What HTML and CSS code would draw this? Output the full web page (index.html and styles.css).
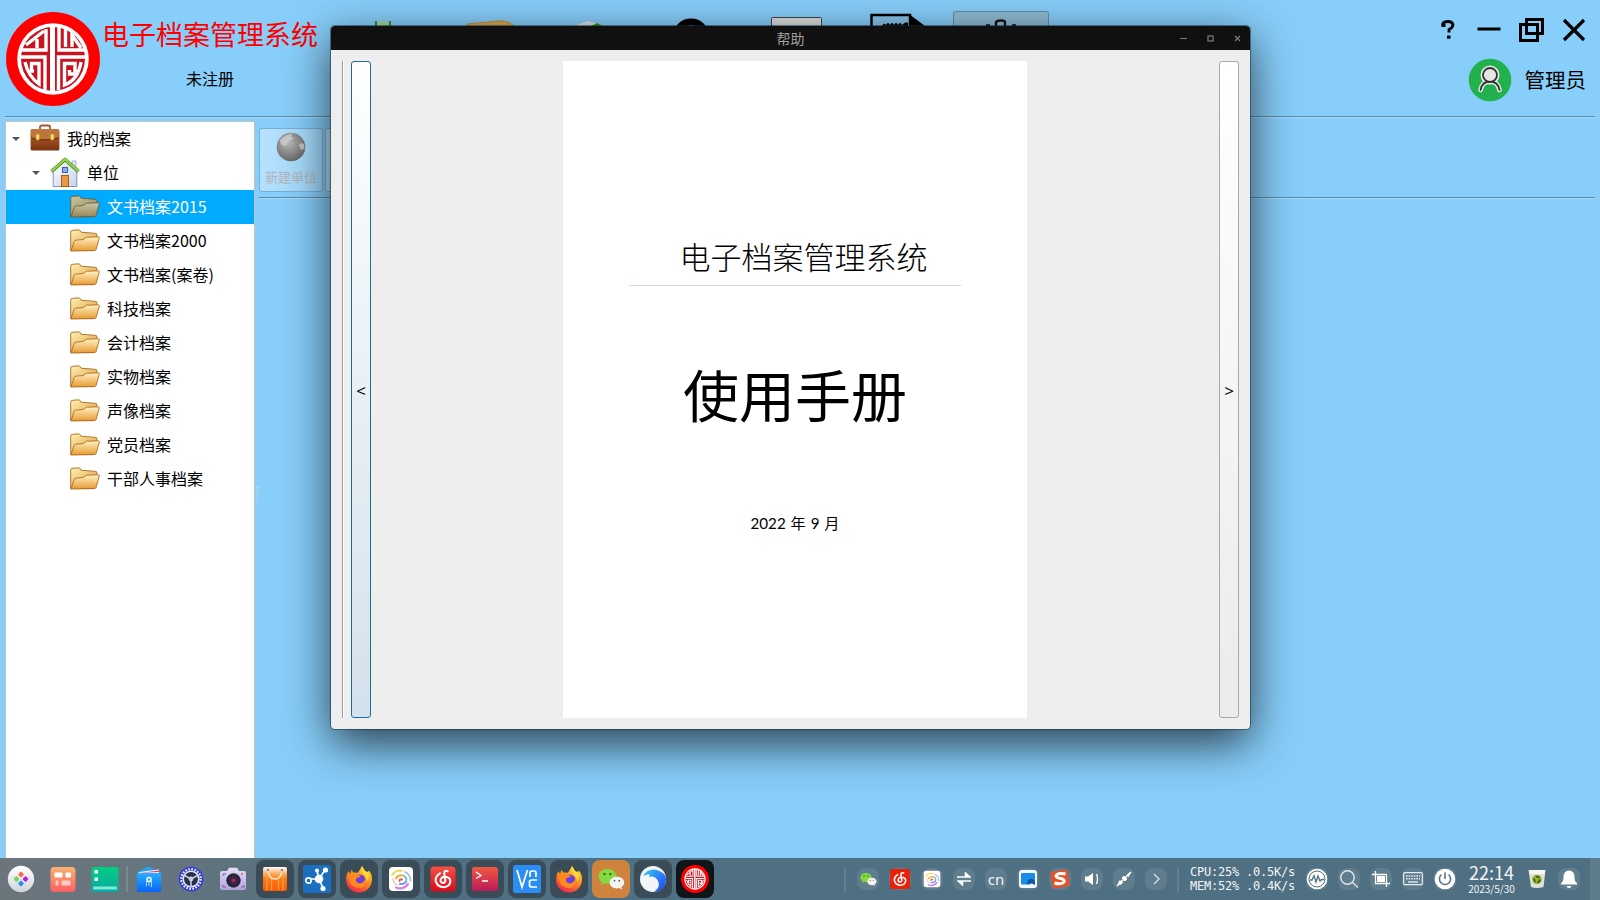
FILE: index.html
```html
<!DOCTYPE html>
<html lang="zh-CN">
<head>
<meta charset="utf-8">
<title>电子档案管理系统</title>
<link rel="stylesheet" href="styles.css">
</head>
<body>
<svg class="defs" width="0" height="0">
  <defs>
    <linearGradient id="gFolder" x1="0" y1="0" x2="0" y2="1"><stop offset="0" stop-color="#fff3c4"/><stop offset="1" stop-color="#e79a32"/></linearGradient>
    <linearGradient id="gFolderBack" x1="0" y1="0" x2="1" y2="1"><stop offset="0" stop-color="#fff0b4"/><stop offset="1" stop-color="#dd9a3c"/></linearGradient>
    <linearGradient id="gCase" x1="0" y1="0" x2="0" y2="1"><stop offset="0" stop-color="#c77f46"/><stop offset=".5" stop-color="#9a4f1e"/><stop offset="1" stop-color="#7c3312"/></linearGradient>
    <linearGradient id="gWall" x1="0" y1="0" x2="1" y2="1"><stop offset="0" stop-color="#fff"/><stop offset="1" stop-color="#c3d3ef"/></linearGradient>
    <radialGradient id="gGlobe" cx=".42" cy=".35" r=".65"><stop offset="0" stop-color="#b9b9b9"/><stop offset="1" stop-color="#6a6a6a"/></radialGradient>
    <linearGradient id="gPeach" x1="0" y1="0" x2="0" y2="1"><stop offset="0" stop-color="#fbb071"/><stop offset="1" stop-color="#f96060"/></linearGradient>
    <linearGradient id="gGreen" x1="0" y1="0" x2="0" y2="1"><stop offset="0" stop-color="#02cf7e"/><stop offset="1" stop-color="#0ba7a4"/></linearGradient>
    <linearGradient id="gBlue" x1="0" y1="0" x2="0" y2="1"><stop offset="0" stop-color="#27b1ff"/><stop offset="1" stop-color="#0a62f5"/></linearGradient>
    <linearGradient id="gOrange" x1="0" y1="0" x2="0" y2="1"><stop offset="0" stop-color="#fff"/><stop offset=".25" stop-color="#ffb36a"/><stop offset=".5" stop-color="#ff7a12"/><stop offset="1" stop-color="#f85a00"/></linearGradient>
    <linearGradient id="gTerm" x1="0" y1="0" x2="0" y2="1"><stop offset="0" stop-color="#f2593f"/><stop offset="1" stop-color="#b91b5b"/></linearGradient>
    <linearGradient id="gRed" x1="0" y1="0" x2="0" y2="1"><stop offset="0" stop-color="#f55145"/><stop offset="1" stop-color="#dc0b18"/></linearGradient>
    <linearGradient id="gFox" x1=".8" y1="0" x2=".3" y2="1"><stop offset="0" stop-color="#ffe635"/><stop offset=".45" stop-color="#ff9220"/><stop offset="1" stop-color="#f0264d"/></linearGradient>
    <linearGradient id="gWave" x1="0" y1="0" x2="1" y2="1"><stop offset="0" stop-color="#39c9f5"/><stop offset="1" stop-color="#1d3bf5"/></linearGradient>
    <linearGradient id="gBall" x1="0" y1="0" x2="0" y2="1"><stop offset="0" stop-color="#fff"/><stop offset="1" stop-color="#cfd5d8"/></linearGradient>
    <linearGradient id="gCam" x1="0" y1="0" x2="0" y2="1"><stop offset="0" stop-color="#e6dffa"/><stop offset="1" stop-color="#b2a2dc"/></linearGradient>

    <symbol id="folder" viewBox="0 0 30 24">
      <path d="M.7 21.5V3.2Q.7 1.600 2.200 1.400L8.600.8Q9.800.8 10.300 2L11 3.200 26 4.400Q27 4.600 26.900 6V10L24 21.500Z" fill="url(#gFolderBack)" stroke="#a8691f" stroke-width=".9"/>
      <path d="M.9 22 4.200 12.200Q4.600 11.200 6 11.100L13 10.600 16.500 8.200 28.400 7.800Q29.600 7.900 29.300 9L26 20.600Q25.700 21.500 24.400 21.600Z" fill="url(#gFolder)" stroke="#b06a1c" stroke-width=".9"/>
    </symbol>
    <symbol id="seal" viewBox="0 0 94 94">
      <circle cx="47" cy="47" r="47" fill="#f00"/>
      <circle cx="47" cy="47" r="35.800" fill="#fff"/>
      <circle cx="47" cy="47" r="32" fill="#c8141e"/>
      <g fill="none" stroke="#fff" stroke-width="3.400">
        <path d="M46.500 14V80" stroke-width="5"/>
        <path d="M40 17V38H16M20 33 38 19M31 36V27"/>
        <path d="M53 15V38H79M59.500 17V35M66 19V35M66 23 75 36"/>
        <path d="M15 45H39V78M19 50Q22 64 33 72V51.500H25.500V59H28"/>
        <path d="M79 45H52.500V78M75 50Q72 68 58.500 73V51.500H69V62H63.500V58"/>
      </g>
    </symbol>
    <symbol id="firefox" viewBox="0 0 28 28">
      <path d="M14 27.5A12.5 12.5 0 0 1 1.2 14Q1 9 3.800 6.200L5 9 6.600 4.800 8.200 7.400 13 7.800 17 1 20 6 22 7 24 5.800Q27 9 27 14.500A13 13 0 0 1 14 27.500Z" fill="url(#gFox)"/>
      <circle cx="14.600" cy="15" r="5.600" fill="#6a3fe0"/>
      <path d="M3.200 12Q8 7.200 13.400 9.400L16 12Q12 12 10.800 14.400 11 18 15 18.400 19 18 20 14 22 20 17 22.400 9 24 5 18Z" fill="#ff8b20"/>
      <path d="M17 1Q15.500 5 19 9.200T22 17Q26 10 22 7L20 6Z" fill="#ffd93a"/>
    </symbol>
    <symbol id="wechat" viewBox="0 0 26 22">
      <path d="M9 1C4.400 1 .6 4 .6 8c0 2.300 1.200 4.100 3 5.400L2.800 16.400 6.200 14.600Q7.600 15 9 15C14 15 17.600 12 17.600 8S13.600 1 9 1Z" fill="#83d940"/>
      <circle cx="6.200" cy="5.800" r="1.100" fill="#2e5514"/><circle cx="11.900" cy="5.800" r="1.100" fill="#2e5514"/>
      <path d="M18.300 8.300c-4 0-7.100 2.500-7.100 5.700s3.100 5.700 7.100 5.700q1.300 0 2.400-.4l2.500 1.500-.6-2.500c1.700-1 2.700-2.500 2.700-4.300 0-3.200-3-5.700-7-5.700Z" fill="#f4f4f4"/>
      <circle cx="15.900" cy="12.200" r=".9" fill="#666"/><circle cx="20.500" cy="12.200" r=".9" fill="#666"/>
    </symbol>
    <symbol id="netease" viewBox="0 0 26 26">
      <rect x=".5" y=".5" width="25" height="25" rx="4" fill="url(#gRed)"/>
      <use href="#note"/>
    </symbol>
    <symbol id="note" viewBox="0 0 26 26">
      <path d="M17.700 5.200Q14.300 4 14.200 7.200L15.400 14.800Q15 17 13 17 10.400 16.600 10.600 14.300 11 11 15 10.800 20 11 20.400 15 20 20.800 13.400 21.200 6.200 20.600 5.600 14.200 5.700 9.700 10 7.300" fill="none" stroke="#fff" stroke-width="2" stroke-linecap="round"/>
    </symbol>
    <symbol id="swirl" viewBox="0 0 26 26">
      <rect x="1" y="1" width="24" height="24" rx="4" fill="#fff"/>
      <g fill="none" stroke-width="1.700" stroke-linecap="round">
        <path d="M4 9Q8 3.500 14 5" stroke="#e9d646"/><path d="M17 6Q23 9 22.500 15" stroke="#b7aef2"/>
        <path d="M8 21.500Q15 24.500 20 18" stroke="#cf7fe8" stroke-width="2.200"/><path d="M5 12Q5 18 10 19" stroke="#f6c4a4" stroke-width="1.200"/>
        <path d="M8 12.500Q10 8.500 15 9.500" stroke="#f0b13c" stroke-width="2"/><path d="M16 10Q19.500 12 18 16" stroke="#58c6b0"/>
        <path d="M12 18Q16 18.500 17.500 16" stroke="#7d8ff0" stroke-width="2"/><path d="M11.500 15Q12 12.500 14 13.500" stroke="#e85b50" stroke-width="2"/>
      </g>
    </symbol>
  </defs>
</svg>

<div class="desktop">
  <main class="app">
    <header class="header">
      <svg class="logo" viewBox="0 0 94 94"><use href="#seal"/></svg>
      <div class="brand">
        <h1 class="brand-name">电子档案管理系统</h1>
        <div class="brand-status">未注册</div>
      </div>
      <nav class="modules">
        <div class="module"><svg viewBox="0 0 96 80"><rect x="41" y="10.500" width="14" height="50" fill="#9fd79c"/><path d="M41 10V60M55 10V60" stroke="#2f8d45" stroke-width="2"/></svg></div>
        <div class="module"><svg viewBox="0 0 96 80"><path d="M29 13 57 10.500Q69 8 76 15V60H29Z" fill="#dba851" stroke="#c48b35"/></svg></div>
        <div class="module"><svg viewBox="0 0 96 80"><path d="M33 15 47 10 64 15V60H33Z" fill="#dde3e6"/><path d="M50 15 56 12 64 16Z" fill="#3d9313"/></svg></div>
        <div class="module"><svg viewBox="0 0 96 80"><circle cx="47" cy="26" r="15" fill="none" stroke="#000" stroke-width="7"/></svg></div>
        <div class="module"><svg viewBox="0 0 96 80"><rect x="24.500" y="6.500" width="50" height="50" rx="1" fill="#dcdcdc" stroke="#3b4145"/></svg></div>
        <div class="module"><svg viewBox="0 0 96 80"><path d="M21.500 60V4H60V60" fill="#87c3ea" stroke="#000" stroke-width="2.500"/><path d="M59 3 75 15V60H59Z"/><path d="M32 15Q34 11 36 14 38 10 40 14 42 10 44 14 46 10 48 14 50 10 52 14 56 10 58 12V19H31Z"/></svg></div>
        <div class="module module-active"><svg viewBox="0 0 96 80"><path d="M43 17V11Q44 9.500 48 9.500T52 11V17M33 14.500H37M59 14.500H63" fill="none" stroke="#111" stroke-width="2.400"/></svg></div>
      </nav>
      <div class="session">
        <div class="controls">
          <svg width="16" height="20" viewBox="0 0 16 20"><path d="M3 6V3.500Q4 1.500 8 1.500T13 4.500Q13 7.500 9 9.500V12.500" fill="none" stroke="#000" stroke-width="2.800"/><rect x="1.500" y="3.500" width="4" height="3.500"/><rect x="7" y="15.500" width="3.500" height="3.200"/></svg>
          <svg width="24" height="24" viewBox="0 0 24 24"><rect x=".5" y="9.500" width="23" height="3"/></svg>
          <svg width="25" height="24" viewBox="0 0 25 24"><g fill="none" stroke="#000" stroke-width="3"><rect x="1.500" y="6.500" width="17" height="16"/><rect x="7.500" y="1.500" width="16" height="14"/></g></svg>
          <svg width="24" height="24" viewBox="0 0 24 24"><path d="M2 2 22 22M22 2 2 22" stroke="#000" stroke-width="3.200"/></svg>
        </div>
        <div class="user">
          <svg width="44" height="44" viewBox="0 0 44 44"><circle cx="22" cy="22" r="21.300" fill="#22b14c"/><g fill="none" stroke-linecap="round"><path d="M12.500 32Q14 23.500 22 23.500T31.500 32" stroke="#eee" stroke-width="4.500"/><circle cx="22" cy="17" r="7.500" fill="#e6e6e6" stroke="#eee" stroke-width="4"/><path d="M12.500 32Q14 23.500 22 23.500T31.500 32" stroke="#333" stroke-width="1.800"/><circle cx="22" cy="17" r="7" fill="#e6e6e6" stroke="#333" stroke-width="1.800"/></g></svg>
          <span class="user-name">管理员</span>
        </div>
      </div>
    </header>

    <div class="workspace">
      <aside class="tree">
        <div class="row level-0"><i class="caret"></i>
          <svg class="row-icon" viewBox="0 0 30 28"><path d="M10 6V3Q10 1.500 12 1.500H18Q20 1.500 20 3V6" fill="none" stroke="#9a5a2c" stroke-width="1.800"/><rect x=".6" y="5" width="28.800" height="21.500" rx="1.500" fill="url(#gCase)"/><path d="M1 5.500H29L29.400 13Q15 18 .6 13Z" fill="#bd753c"/><path d="M1 14Q15 18 29 14" fill="none" stroke="#6e2c0c"/><rect x="6" y="10" width="3.500" height="6" rx="1.300" fill="#ffdf6b" stroke="#b98022" stroke-width=".6"/><rect x="20.500" y="10" width="3.500" height="6" rx="1.300" fill="#ffdf6b" stroke="#b98022" stroke-width=".6"/></svg>
          <span>我的档案</span></div>
        <div class="row level-1"><i class="caret"></i>
          <svg class="row-icon house" viewBox="0 0 30 30"><rect x="22" y="4" width="4" height="9" fill="#dfe6f5" stroke="#8c9ac0" stroke-width=".7"/><path d="M3.200 13.500 15 3 26.800 13.500V29.500H3.200Z" fill="url(#gWall)" stroke="#6a7ba8" stroke-width=".8"/><path d="M1.500 14.500 15 2.500 28.500 14.500" fill="none" stroke="#4b8b17" stroke-width="3.600" stroke-linejoin="round"/><path d="M1.500 14.200 15 2.200 28.500 14.200" fill="none" stroke="#9ad850" stroke-width="1.900"/><rect x="12.500" y="10.500" width="5" height="5" fill="#8ab0ec" stroke="#4260a2"/><rect x="11.500" y="18.500" width="7" height="11" fill="#eb9a42" stroke="#a65e17"/></svg>
          <span>单位</span></div>
        <div class="row level-2 selected"><svg class="row-icon" viewBox="0 0 30 24"><use href="#folder"/></svg><span>文书档案2015</span></div>
        <div class="row level-2"><svg class="row-icon" viewBox="0 0 30 24"><use href="#folder"/></svg><span>文书档案2000</span></div>
        <div class="row level-2"><svg class="row-icon" viewBox="0 0 30 24"><use href="#folder"/></svg><span>文书档案(案卷)</span></div>
        <div class="row level-2"><svg class="row-icon" viewBox="0 0 30 24"><use href="#folder"/></svg><span>科技档案</span></div>
        <div class="row level-2"><svg class="row-icon" viewBox="0 0 30 24"><use href="#folder"/></svg><span>会计档案</span></div>
        <div class="row level-2"><svg class="row-icon" viewBox="0 0 30 24"><use href="#folder"/></svg><span>实物档案</span></div>
        <div class="row level-2"><svg class="row-icon" viewBox="0 0 30 24"><use href="#folder"/></svg><span>声像档案</span></div>
        <div class="row level-2"><svg class="row-icon" viewBox="0 0 30 24"><use href="#folder"/></svg><span>党员档案</span></div>
        <div class="row level-2"><svg class="row-icon" viewBox="0 0 30 24"><use href="#folder"/></svg><span>干部人事档案</span></div>
      </aside>
      <div class="splitter"><i class="grip"></i></div>
      <section class="content">
        <div class="toolbar">
          <button class="tool"><svg width="30" height="30" viewBox="0 0 30 30"><circle cx="15" cy="15" r="14.300" fill="url(#gGlobe)"/><path d="M4 8Q9 2 17 1.500L15 5 18 6 12 10 10 14 5 13ZM24 11 28 12 28.500 17 25 18 23 14ZM10 6 14 3 13 7Z" fill="#d2d2d2" opacity=".75"/></svg><span>新建单位</span></button>
          <button class="tool"></button>
        </div>
      </section>
    </div>
  </main>

  <footer class="taskbar">
    <div class="dock">
      <div class="app-slot"><svg width="28" height="28" viewBox="0 0 28 28"><circle cx="14" cy="14" r="13.200" fill="url(#gBall)"/><g transform="rotate(45 14 14)"><rect x="8.600" y="8.600" width="4.400" height="4.400" rx="1" fill="#ff6b4a"/><rect x="15" y="8.600" width="4.400" height="4.400" rx="1" fill="#ba22e0"/><rect x="8.600" y="15" width="4.400" height="4.400" rx="1" fill="#76d35d"/><rect x="15" y="15" width="4.400" height="4.400" rx="1" fill="#248ff5"/></g></svg></div>
      <div class="app-slot"><svg width="26" height="26" viewBox="0 0 26 26"><rect x=".5" y="1" width="25" height="25" rx="3.500" fill="url(#gPeach)"/><g fill="#fff"><rect x="4.500" y="6.500" width="8" height="5" rx="1"/><rect x="15.500" y="6.500" width="5.500" height="5" rx="1"/><rect x="5.500" y="14.500" width="3" height="5" rx="1" opacity=".6"/><rect x="11.500" y="14.500" width="9" height="5" rx="1" opacity=".6"/></g></svg></div>
      <div class="app-slot"><svg width="28" height="26" viewBox="0 0 28 26"><rect x=".5" y="1" width="27" height="25" rx="2" fill="url(#gGreen)"/><rect x="2" y="20.500" width="24" height="3" rx="1" fill="#7cebd4"/><rect x="3.500" y="4" width="3.500" height="3.500" fill="#fff"/><rect x="3.500" y="11.500" width="3.500" height="3.500" fill="#fff"/></svg></div>
      <i class="dock-sep"></i>
      <div class="app-slot"><svg width="26" height="28" viewBox="0 0 26 28"><path d="M1 7 12 1.500 25 7V12H1Z" fill="#23a2ef"/><path d="M3 7 23 4.500V10H3Z" fill="#f5f8ff"/><path d="M3 8 23 5.500V7Z" fill="#f33c6c"/><rect x=".8" y="8" width="24.400" height="19" rx="2" fill="url(#gBlue)"/><circle cx="13" cy="14.500" r="2" fill="none" stroke="#fff" stroke-width="1.500"/><path d="M13 16.500V21M10.500 16V21M15.500 16V22" stroke="#b9dcff" stroke-width=".9"/></svg></div>
      <div class="app-slot"><svg width="26" height="26" viewBox="0 0 26 26"><circle cx="13" cy="13" r="12.300" fill="#3537dc"/><circle cx="13" cy="13" r="9.800" fill="none" stroke="#e9eef5" stroke-width="2.200" stroke-dasharray="1.700 1.380"/><circle cx="13" cy="13" r="7.800" fill="#26304a" stroke="#e4e9ef" stroke-width="1.600"/><path d="M13 13V20.500M13 13 6.500 9.500M13 13 19.500 9.500" stroke="#c6ced8" stroke-width="1.600"/><circle cx="13" cy="13" r="2.400" fill="#c6ced8"/></svg></div>
      <div class="app-slot"><svg width="28" height="26" viewBox="0 0 28 26"><path d="M8 5 10 1.800H18L20 5H25Q27 5 27 7V22Q27 24 25 24H3Q1 24 1 22V7Q1 5 3 5Z" fill="url(#gCam)"/><circle cx="14.500" cy="14.500" r="7.200" fill="#25253a"/><circle cx="14.500" cy="14.500" r="4.300" fill="#4c2146"/><circle cx="14.500" cy="14.500" r="1.800" fill="#a02a65"/><circle cx="23" cy="8" r="1" fill="#ef5350"/><path d="M4 10V8H7M4 19V21H7M25 19V21H22" fill="none" stroke="#75628f"/></svg></div>
      <div class="app-slot running"><svg width="26" height="26" viewBox="0 0 26 26"><rect x="1" y="1" width="24" height="24" rx="2" fill="url(#gOrange)"/><path d="M5 10V24M9.500 13V24M16.500 13V24M21 10V24" stroke="#ff9d4d" stroke-width="1.300"/><path d="M6 5Q7 13 13 13T20 5" fill="none" stroke="#ffe6d2" stroke-width="1.600"/><circle cx="6" cy="4" r="1.200" fill="#888"/><circle cx="20" cy="4" r="1.200" fill="#888"/></svg></div>
      <div class="app-slot running"><svg width="28" height="28" viewBox="0 0 28 28"><rect width="28" height="28" rx="2" fill="#1a6fc0"/><g stroke="#fff" stroke-width="1.700" fill="none"><path d="M16 14H8M16 14 14 6M16 14 22 5M16 14 20 23"/><circle cx="5.500" cy="15.500" r="2.700"/></g><g fill="#fff"><circle cx="16" cy="14" r="4.300"/><circle cx="14" cy="5.500" r="2"/><circle cx="22.500" cy="5" r="2.600"/><circle cx="20" cy="23.500" r="2.600"/></g></svg></div>
      <div class="app-slot running"><svg width="28" height="28"><use href="#firefox"/></svg></div>
      <div class="app-slot running"><svg width="26" height="26"><use href="#swirl"/></svg></div>
      <div class="app-slot running"><svg width="26" height="26"><use href="#netease"/></svg></div>
      <div class="app-slot running"><svg width="26" height="26" viewBox="0 0 26 26"><rect y="1" width="26" height="24" rx="2.500" fill="url(#gTerm)"/><path d="M4 6 9 9.500 4 12.500M10 15H16" fill="none" stroke="#fff" stroke-width="1.300"/></svg></div>
      <div class="app-slot running"><svg width="28" height="28" viewBox="0 0 28 28"><rect width="28" height="28" rx="2" fill="#2a8ff5"/><g fill="none" stroke="#fff" stroke-width="1.700"><path d="M4 5 9 22 14.500 5M17 12V8Q17 6 19 6H21Q23 6 23 8V12M24 15H19Q16.500 15 16.500 17V20Q16.500 22 19 22H24"/></g></svg></div>
      <div class="app-slot running"><svg width="28" height="28"><use href="#firefox"/></svg></div>
      <div class="app-slot running attention"><svg width="27" height="23"><use href="#wechat"/></svg></div>
      <div class="app-slot running"><svg width="28" height="28" viewBox="0 0 28 28"><circle cx="14" cy="14" r="13" fill="#f3f5f7"/><path d="M4 11Q9 3 18 5 27 8 27 14 26 26 15 27 22 22 19 16 16 10 10 12 13 7 4 11Z" fill="url(#gWave)"/></svg></div>
      <div class="app-slot running current"><svg width="28" height="28"><use href="#seal"/></svg></div>
    </div>

    <div class="tray">
      <i class="tray-sep"></i>
      <div class="tray-slot"><svg width="17" height="15"><use href="#wechat"/></svg></div>
      <div class="tray-slot"><svg width="20" height="20" viewBox="0 0 20 20"><rect width="20" height="20" rx="2.500" fill="#ea2108"/><use href="#note" width="20" height="20"/></svg></div>
      <div class="tray-slot"><svg width="18" height="18"><use href="#swirl"/></svg></div>
      <div class="tray-slot"><svg width="14" height="14" viewBox="0 0 14 14"><path d="M0 5H13L8.500 1V5M14 9H1L5.500 13V9" fill="#fff" stroke="#fff" stroke-width="1.500"/></svg></div>
      <div class="tray-slot"><span class="ime">cn</span></div>
      <div class="tray-slot"><svg width="18" height="18" viewBox="0 0 18 18"><rect width="18" height="18" rx="3" fill="#f5f9fd"/><path d="M2 4Q2 3 3 3H15Q16 3 16 4V14.500L13.500 13 11 14.500H3Q2 14.500 2 13.500Z" fill="#188ceb"/><path d="M8 14.500Q8 9 12 9T16 12V15L12 13Z" fill="#125697"/></svg></div>
      <div class="tray-slot"><svg width="20" height="20" viewBox="0 0 20 20"><path d="M1.500 4 16 1.500 18.500 16 4 18.500Z" fill="#e95023" stroke="#e95023" stroke-width="2" stroke-linejoin="round"/><path d="M15.500 5Q7 3.500 6 7 6.500 9 11 9.500 15 10.500 14 13 12 16 4.500 14" fill="none" stroke="#fff" stroke-width="3"/></svg></div>
      <div class="tray-slot"><svg width="14" height="14" viewBox="0 0 14 14"><path d="M0 4.500H3L8 1V13L3 9.500H0Z" fill="#fff"/><path d="M11.500 2Q13.500 7 11.500 12" fill="none" stroke="#fff" stroke-width="1.300"/></svg></div>
      <div class="tray-slot"><svg width="16" height="16" viewBox="0 0 16 16"><path d="M1 15 15 1" stroke="#fff" stroke-width="1.600"/><path d="M4 9.500 6.500 12 4 13.500 2.500 12ZM8 5 11 8 9 10 6 7ZM11.500 3.500 14 2 12.500 5.500Z" fill="#fff" stroke="#fff"/></svg></div>
      <div class="tray-slot"><svg width="8" height="12" viewBox="0 0 8 12"><path d="M2 1 7 6 2 11" fill="none" stroke="#dce4e8" stroke-width="1.300"/></svg></div>
      <i class="tray-sep"></i>
      <div class="meter"><div>CPU:25% .0.5K/s</div><div>MEM:52% .0.4K/s</div></div>
      <div class="tray-slot"><svg width="22" height="22" viewBox="0 0 22 22"><circle cx="11" cy="11" r="10.300" fill="#fff"/><circle cx="11" cy="11" r="8" fill="none" stroke="#4f6f82" stroke-width="1"/><path d="M4 12H6L8 7.500 10 14 12 8 14 13 15.500 11.500H18" fill="none" stroke="#4f6f82" stroke-width="1.300"/></svg></div>
      <div class="tray-slot"><svg width="20" height="20" viewBox="0 0 20 20"><circle cx="8.500" cy="8.500" r="6.700" fill="none" stroke="#dfe6ea" stroke-width="1.400"/><path d="M13.500 13.500 19 18.500" stroke="#dfe6ea" stroke-width="1.400"/></svg></div>
      <div class="tray-slot"><svg width="18" height="16" viewBox="0 0 18 16"><path d="M0 3.500H14.500V16M3.500 0V12.500H18" fill="none" stroke="#fff" stroke-width="1.300"/><rect x="5" y="5" width="8" height="6" fill="#fff"/></svg></div>
      <div class="tray-slot"><svg width="20" height="14" viewBox="0 0 20 14"><rect x=".7" y=".7" width="18.600" height="12" rx="1" fill="none" stroke="#e6ecef" stroke-width="1.200"/><path d="M3 4H17M3 6.800H17" stroke="#e6ecef" stroke-width="1.600" stroke-dasharray="1.600 1"/><path d="M5 10H15" stroke="#e6ecef" stroke-width="1.400"/></svg></div>
      <div class="tray-slot"><svg width="22" height="22" viewBox="0 0 22 22"><circle cx="11" cy="11" r="10.300" fill="#fff"/><path d="M7.500 6.500A5.600 5.600 0 1 0 14.500 6.500M11 4.500V11" fill="none" stroke="#5b7585" stroke-width="1.600"/></svg></div>
      <div class="clock"><div class="time">22:14</div><div class="date">2023/5/30</div></div>
      <div class="tray-slot bare"><svg width="18" height="20" viewBox="0 0 18 20"><path d="M.5 1H17.500L15.500 18Q9 20 3 18Z" fill="#dfe3dc"/><path d="M1 1H17L16.500 5H1.500Z" fill="#f8f9f7"/><circle cx="9" cy="10.500" r="4.800" fill="#98b836"/><circle cx="9" cy="10.500" r="2.800" fill="none" stroke="#3b5c10" stroke-width="1.700" stroke-dasharray="4 1.800"/></svg></div>
      <div class="tray-slot"><svg width="18" height="20" viewBox="0 0 18 20"><path d="M9 1.500Q14.500 2 14.500 8 14.500 13 17 14V15.500H1V14Q3.500 13 3.500 8 3.500 2 9 1.500ZM6.500 17H11.500Q11 19 9 19T6.500 17Z" fill="#fff"/></svg></div>
      <i class="show-desktop"></i>
    </div>
  </footer>

  <div class="dialog">
    <div class="titlebar">
      <span class="dialog-title">帮助</span>
      <div class="dialog-controls">
        <svg width="7" height="7" viewBox="0 0 7 7"><path d="M0 3.500H7" stroke="#7e7e7e"/></svg>
        <svg width="7" height="7" viewBox="0 0 7 7"><rect x="1" y="1" width="5" height="5" fill="none" stroke="#7e7e7e" stroke-width="1.200"/></svg>
        <svg width="7" height="7" viewBox="0 0 7 7"><path d="M1 1 6 6M6 1 1 6" stroke="#7e7e7e" stroke-width="1.100"/></svg>
      </div>
    </div>
    <div class="viewer">
      <i class="edge"></i>
      <button class="pager pager-prev">&lt;</button>
      <div class="stage">
        <article class="page">
          <div class="page-title">电子档案管理系统</div>
          <div class="page-heading">使用手册</div>
          <div class="page-date">2022 年 9 月</div>
        </article>
      </div>
      <button class="pager pager-next">&gt;</button>
    </div>
  </div>
</div>
</body>
</html>
```

FILE: styles.css
```css
* { box-sizing: border-box; }
body {
  margin: 0;
  font-family: "Noto Sans CJK SC", "Noto Sans", sans-serif;
  color: #000;
}
svg { display: block; flex: none; }
button { font-family: inherit; padding: 0; margin: 0; }
.defs { position: absolute; }

.desktop {
  position: relative;
  display: flex;
  flex-direction: column;
  width: 1600px;
  height: 900px;
  overflow: hidden;
  background: #87cefa;
}
.app { flex: 1; min-height: 0; display: flex; flex-direction: column; }

/* Header */
.header {
  display: flex;
  height: 118px;
  margin: 0 5px;
  border-bottom: 1px solid #a5dbfc;
  box-shadow: inset 0 -1px 0 #5b8bab;
}
.logo { width: 94px; height: 94px; margin: 12px 0 0 1px; }
.brand { width: 220px; margin-left: 2px; }
.brand-name {
  margin: 14px 0 0;
  font-size: 27px;
  line-height: 40px;
  font-weight: 400;
  color: #f00;
  white-space: nowrap;
}
.brand-status { margin-top: 12px; font-size: 16px; line-height: 24px; text-align: center; padding-right: 4px; }
.modules { display: flex; gap: 7px; margin: 11px 0 0 13px; }
.module { width: 96px; height: 80px; }
.module svg { width: 96px; height: 80px; }
.module-active { background: #8fbbd4; border-radius: 3px; box-shadow: inset 0 0 0 1px #638fab; }
.session { margin-left: auto; padding-right: 9px; }
.controls { display: flex; align-items: center; justify-content: flex-end; gap: 18px; margin-top: 18px; height: 24px; }
.controls svg:first-child { margin-right: 3px; }
.user { display: flex; align-items: center; gap: 13px; margin-top: 16px; justify-content: flex-end; }
.user-name { font-size: 20.5px; line-height: 42px; padding-bottom: 2px; }

/* Archive tree */
.workspace { flex: 1; min-height: 0; display: flex; padding: 3px 5px 0; }
.tree { width: 250px; background: #fff; border: 1px solid #c3c3c3; border-bottom: 0; font-size: 16px; }
.row { display: flex; align-items: center; height: 34px; color: #000; white-space: nowrap; }
.row span { margin-left: 7px; padding-bottom: 3px; }
.row-icon { width: 30px; height: 28px; }
.level-0 .row-icon, .level-1 .row-icon { margin-bottom: 2px; }
.row-icon.house { height: 30px; }
.caret { width: 8px; height: 4px; background: #555; clip-path: polygon(0 0, 100% 0, 50% 100%); margin: 0 10px 0 0; }
.level-0 { padding-left: 6px; }
.level-1 { padding-left: 26px; }
.level-2 { padding-left: 64px; }
.selected { background: #00aaff; color: #fff; }
.selected .row-icon { filter: saturate(.55) brightness(.82) hue-rotate(12deg); }
.splitter { width: 4px; display: flex; align-items: center; justify-content: center; }
.grip { width: 3px; height: 16px; margin-top: 9px; border: dotted #a9ddfb; border-width: 0 1px; }
.content { flex: 1; min-width: 0; }
.toolbar {
  display: flex;
  gap: 2px;
  height: 78px;
  padding-top: 7px;
  border-bottom: 1px solid #a5dbfc;
  box-shadow: inset 0 -1px 0 #5b8bab;
}
.tool {
  width: 64px;
  height: 64px;
  display: flex;
  flex-direction: column;
  align-items: center;
  gap: 4px;
  padding-top: 3px;
  border: 1px solid #74b0d6;
  border-radius: 3px;
  background: linear-gradient(100deg, #b9e2fc, #9dd7fb);
  font-size: 13px;
  line-height: 22px;
  color: #b4b4b8;
}

/* Help dialog */
.dialog {
  position: absolute;
  left: 331px;
  top: 26px;
  width: 919px;
  height: 703px;
  display: flex;
  flex-direction: column;
  border-radius: 4px;
  background: #eee;
  box-shadow: 0 0 0 1px rgba(20, 50, 70, .55), 0 14px 46px rgba(0, 0, 0, .72);
}
.titlebar {
  display: grid;
  grid-template-columns: 1fr auto 1fr;
  align-items: center;
  height: 24px;
  border-radius: 4px 4px 0 0;
  background: #101010;
}
.dialog-title { grid-column: 2; font-size: 14px; line-height: 24px; color: #a0a0a0; }
.dialog-controls { display: flex; justify-content: flex-end; gap: 20px; padding-right: 9px; }
.viewer { flex: 1; display: flex; padding: 11px; min-height: 0; }
.edge { width: 2px; margin-right: 7px; border-left: 1px solid #9d9d9d; background: #fff; }
.pager { width: 20px; padding-top: 1px; border-radius: 3px; font-family: "Noto Sans", sans-serif; font-size: 17px; color: #111; }
.pager-prev { border: 1px solid #1b6c9c; background: linear-gradient(#fff, #d3e1ec); }
.pager-next { border: 1px solid #a9a9a9; background: linear-gradient(#fff, #ebebeb); }
.stage { flex: 1; display: flex; padding-left: 192px; }
.page { width: 464px; background: #fff; text-align: center; white-space: nowrap; }
.page-title {
  width: 332px;
  margin: 173px 0 0 66px;
  padding-left: 17px;
  height: 52px;
  line-height: 44px;
  font-size: 31px;
  font-weight: 300;
  border-bottom: 1px solid #cdd9e4;
}
.page-heading { margin-top: 66px; font-size: 56px; line-height: 82px; font-weight: 400; }
.page-date { margin-top: 76px; font-family: Lato, "Noto Sans CJK SC", sans-serif; font-size: 15.2px; line-height: 26px; word-spacing: 1px; }

/* Taskbar */
.taskbar {
  display: flex;
  justify-content: space-between;
  height: 42px;
  background: linear-gradient(90deg, #6b757c 0, #66757e 150px, #53707f 330px, #4f6f82 450px);
  color: #f2f5f7;
}
.dock, .tray { display: flex; align-items: center; }
.dock-sep { width: 2px; height: 26px; background: #7b8990; }
.app-slot { width: 42px; height: 42px; display: flex; align-items: center; justify-content: center; }
.running { width: 38px; height: 38px; margin: 0 2px; border-radius: 8px; background: #3a4c58; }
.attention { background: #cf843e; }
.current { background: #10151a; }
.tray-sep { width: 2px; height: 25px; margin-right: 6px; background: #63808f; }
.tray-slot {
  width: 22px;
  height: 22px;
  margin: 0 5px;
  display: flex;
  align-items: center;
  justify-content: center;
  border-radius: 8px;
  background: #607d8e;
}
.bare { background: none; }
.tray .tray-slot + .tray-sep { margin-left: 5px; }
.ime { font-family: "Noto Sans", sans-serif; font-size: 15px; line-height: 20px; }
.meter {
  width: 116px;
  padding-left: 5px;
  font-family: "DejaVu Sans Mono", monospace;
  font-size: 12px;
  letter-spacing: -.22px;
  line-height: 14px;
  white-space: nowrap;
}
.clock { width: 59px; text-align: center; margin: 0 0 0 1px; }
.time { font-size: 18px; line-height: 20px; }
.date { font-size: 10px; line-height: 14px; }
.show-desktop { width: 10px; align-self: stretch; margin-left: 5px; background: #5f7c8d; }
```
